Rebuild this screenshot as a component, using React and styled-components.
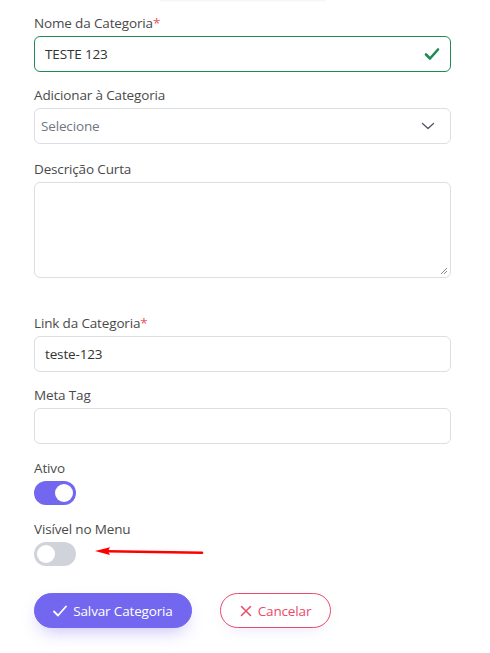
import React from "react";
import styled, { createGlobalStyle } from "styled-components";

const Global = createGlobalStyle`
  html, body { margin: 0; padding: 0; background: #fff; }
  body { font-family: "Open Sans", "Noto Sans", sans-serif; }
  * { box-sizing: border-box; }
`;

const Page = styled.div`
  position: relative;
  display: flex;
  flex-direction: column;
  width: 490px;
  height: 653px;
  padding: 13px 39px 0 34px;
  overflow: hidden;
`;

const TopShade = styled.div`
  position: absolute;
  top: 0;
  left: 160px;
  width: 166px;
  height: 2px;
  background: linear-gradient(#f4f4f6, #fff);
`;

const Group = styled.div`
  display: flex;
  flex-direction: column;
  margin-top: ${(p) => p.$mt ?? 0}px;
  margin-bottom: ${(p) => p.$mb ?? 13}px;
`;

const Label = styled.label`
  font-size: 13.5px;
  line-height: 20px;
  color: #4a4a4a;
  margin-bottom: 3px;
  letter-spacing: -0.15px;
`;

const Req = styled.span`
  color: #ea5455;
`;

const Field = styled.div`
  position: relative;
  display: flex;
  align-items: center;
  height: 36px;
  border: 1px solid ${(p) => (p.$valid ? "#1f8a55" : "#dcdee3")};
  border-radius: 6px;
  padding: 0 10px;
  font-size: 13.5px;
  letter-spacing: -0.15px;
  color: ${(p) => (p.$placeholder ? "#707784" : "#333")};
  padding-left: ${(p) => (p.$placeholder ? 6 : 10)}px;
  justify-content: space-between;
`;

const TextArea = styled.div`
  position: relative;
  height: 96px;
  border: 1px solid #dcdee3;
  border-radius: 6px;
`;

const Grip = styled.svg`
  position: absolute;
  right: 2px;
  bottom: 2px;
`;

const Switch = styled.div`
  width: 42px;
  height: 24px;
  border-radius: 12px;
  background: ${(p) => (p.$on ? "#7367f0" : "#d0d4da")};
  display: flex;
  align-items: center;
  justify-content: ${(p) => (p.$on ? "flex-end" : "flex-start")};
  padding: 0 3px;
`;

const Knob = styled.div`
  width: 18px;
  height: 18px;
  border-radius: 50%;
  background: #fff;
`;

const Actions = styled.div`
  display: flex;
  gap: 28px;
  margin-top: 13px;
`;

const Btn = styled.button`
  display: flex;
  align-items: center;
  justify-content: center;
  gap: 6px;
  height: 35px;
  border-radius: 18px;
  font-family: inherit;
  font-size: 13.5px;
  letter-spacing: -0.15px;
  padding: 0;
  width: ${(p) => p.$w}px;
  background: ${(p) => (p.$primary ? "#7367f0" : "#fff")};
  color: ${(p) => (p.$primary ? "#fff" : "#ea4a6a")};
  border: 1px solid ${(p) => (p.$primary ? "#7367f0" : "#ea4a6a")};
  box-shadow: ${(p) =>
    p.$primary
      ? "0 8px 18px -6px rgba(115,103,240,0.45)"
      : "0 6px 16px -8px rgba(115,103,240,0.25)"};
`;

const Arrow = styled.svg`
  position: absolute;
  left: 93px;
  top: 544px;
`;

export default function App() {
  return (
    <>
      <Global />
      <Page>
        <TopShade />
        <Group>
          <Label>
            Nome da Categoria<Req>*</Req>
          </Label>
          <Field $valid>
            TESTE 123
            <svg width="16" height="14" viewBox="0 0 16 14">
              <path d="M2 7.5 L6 11.5 L14 2.5" fill="none" stroke="#1f8a55" strokeWidth="2.6" strokeLinecap="round" strokeLinejoin="round" />
            </svg>
          </Field>
        </Group>
        <Group>
          <Label>Adicionar à Categoria</Label>
          <Field $placeholder>
            Selecione
            <svg width="16" height="16" viewBox="0 0 16 16" style={{ marginRight: 4 }}>
              <path d="M2.5 5.5 L8 10.5 L13.5 5.5" fill="none" stroke="#555b66" strokeWidth="1.4" strokeLinecap="round" strokeLinejoin="round" />
            </svg>
          </Field>
        </Group>
        <Group $mt={2} $mb={35}>
          <Label>Descrição Curta</Label>
          <TextArea>
            <Grip width="8" height="8" viewBox="0 0 8 8">
              <path d="M7 1 L1 7 M7 4 L4 7" stroke="#8a8a8a" strokeWidth="1" />
            </Grip>
          </TextArea>
        </Group>
        <Group>
          <Label>
            Link da Categoria<Req>*</Req>
          </Label>
          <Field>teste-123</Field>
        </Group>
        <Group $mb={14}>
          <Label>Meta Tag</Label>
          <Field />
        </Group>
        <Group $mb={14}>
          <Label>Ativo</Label>
          <Switch $on>
            <Knob />
          </Switch>
        </Group>
        <Group $mb={14}>
          <Label>Visível no Menu</Label>
          <Switch>
            <Knob />
          </Switch>
        </Group>
        <Actions>
          <Btn $primary $w={158}>
            <svg width="14" height="12" viewBox="0 0 14 12">
              <path d="M1 6.5 L5 10.5 L13 1.5" fill="none" stroke="#fff" strokeWidth="1.8" strokeLinecap="round" strokeLinejoin="round" />
            </svg>
            Salvar Categoria
          </Btn>
          <Btn $w={111}>
            <svg width="12" height="12" viewBox="0 0 12 12">
              <path d="M1.5 1.5 L10.5 10.5 M10.5 1.5 L1.5 10.5" fill="none" stroke="#ea4a6a" strokeWidth="1.5" strokeLinecap="round" />
            </svg>
            Cancelar
          </Btn>
        </Actions>
        <Arrow width="112" height="16" viewBox="0 0 112 16">
          <path d="M14 7.2 L109 8.8" stroke="#f00" strokeWidth="2.6" strokeLinecap="round" />
          <path d="M2 7 L17 3.2 L15 7.2 L17 11 Z" fill="#f00" />
        </Arrow>
      </Page>
    </>
  );
}
